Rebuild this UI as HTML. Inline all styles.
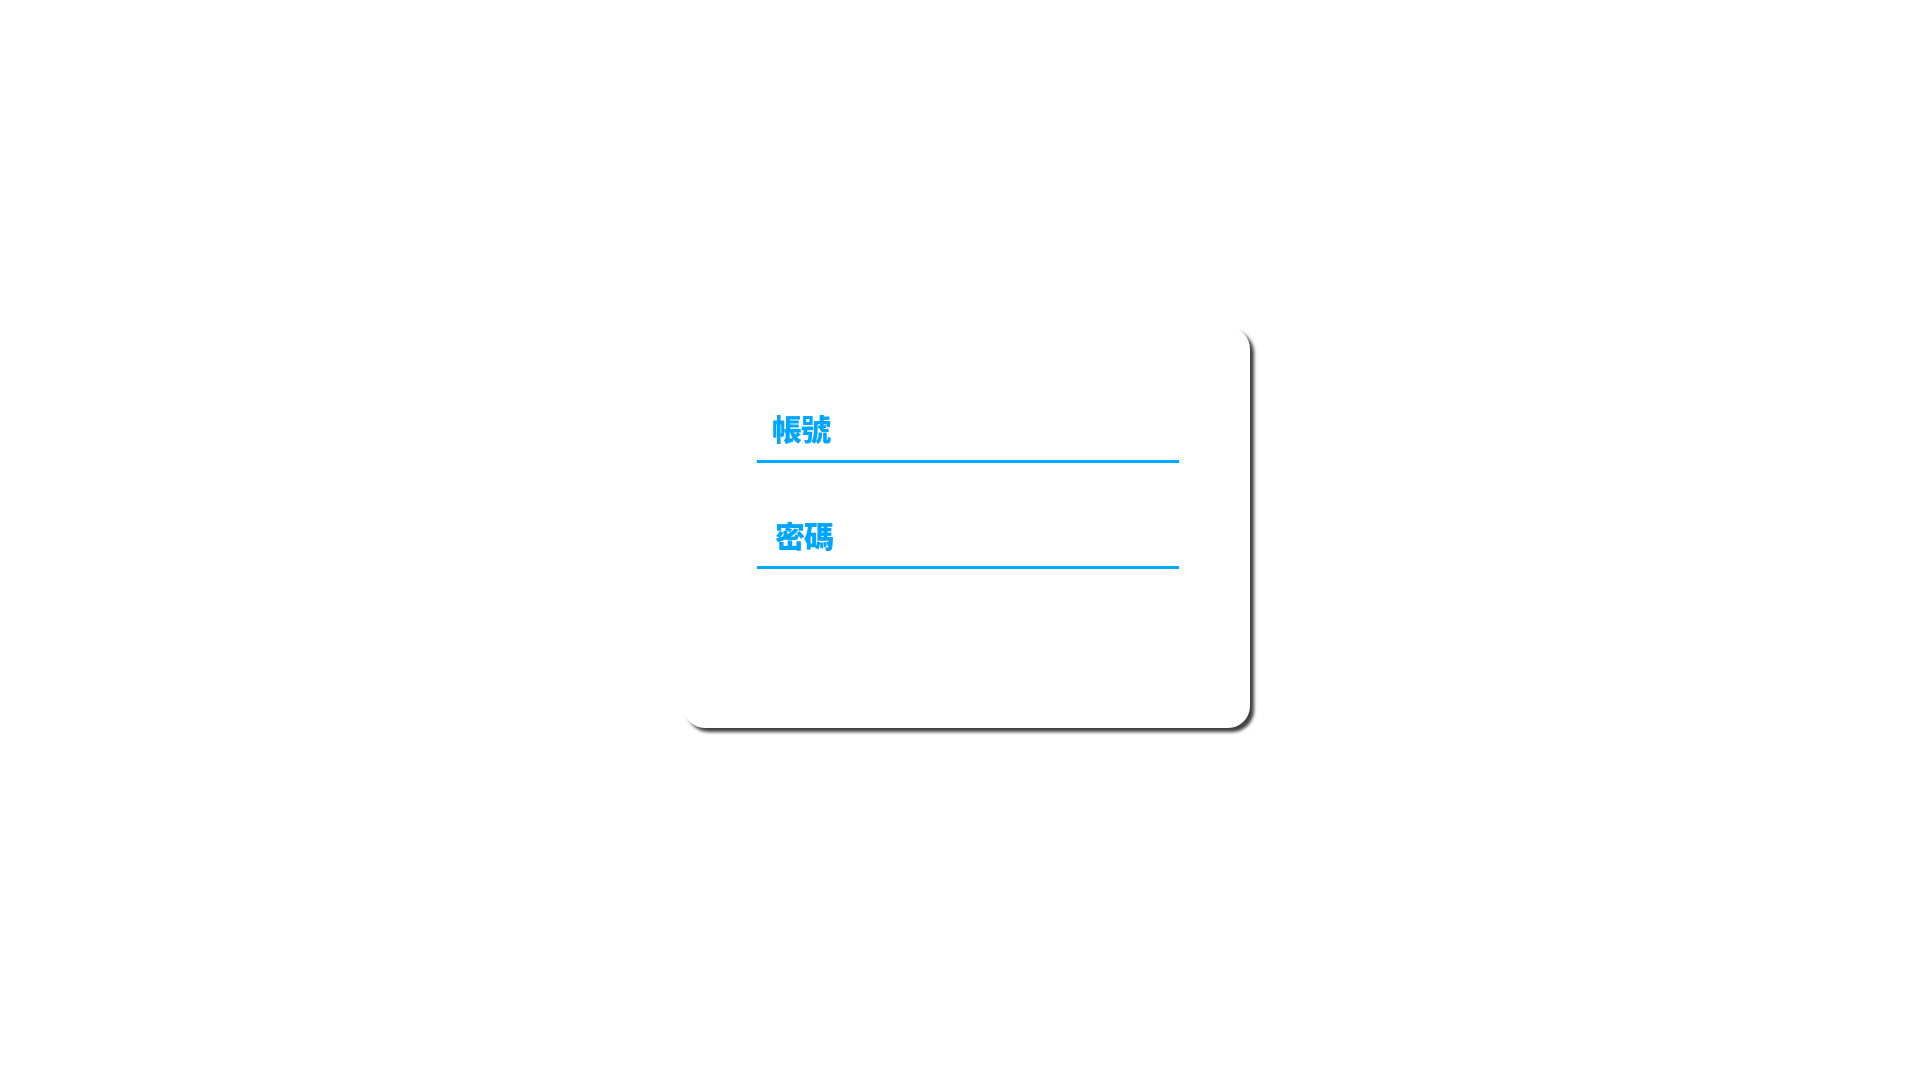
<!DOCTYPE html>
<html><head><meta charset="utf-8"><style>
html,body{margin:0;padding:0;background:#fff;width:1920px;height:1080px;overflow:hidden}
.card{position:absolute;left:683px;top:327px;width:567px;height:401px;background:#fff;border-radius:22px;box-shadow:4px 4px 3px rgba(0,0,0,0.75)}
.t{position:absolute;font-family:"Liberation Sans","Noto Sans CJK TC",sans-serif;font-weight:900;font-size:30px;line-height:30px;color:#00a6ff;letter-spacing:-1px}
.l{position:absolute;left:757px;width:422px;height:3px;background:#00aaff}
</style></head><body>
<div class="card"></div>
<div class="t" style="left:772px;top:417px">帳號</div>
<div class="l" style="top:460px"></div>
<div class="t" style="left:775px;top:524px">密碼</div>
<div class="l" style="top:566px"></div>
</body></html>
